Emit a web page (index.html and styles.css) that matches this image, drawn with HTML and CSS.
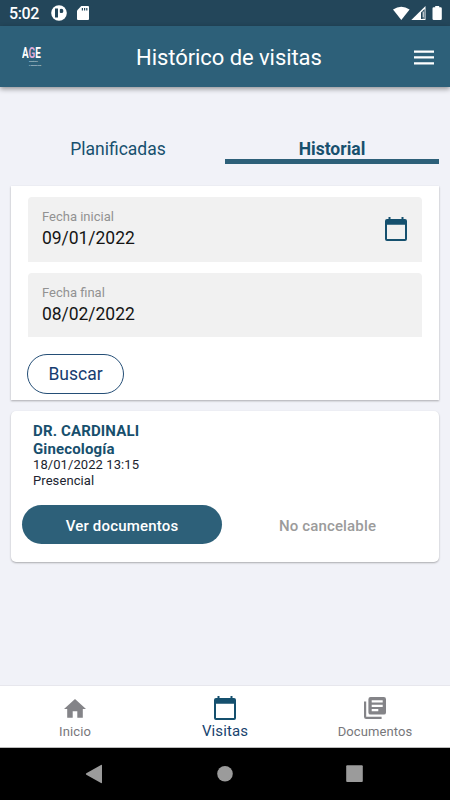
FILE: index.html
```html
<!DOCTYPE html>
<html lang="es">
<head>
<meta charset="utf-8">
<title>Histórico de visitas</title>
<link rel="stylesheet" href="styles.css">
</head>
<body>
<div class="status">
  <span class="clock">5:02</span>
  <svg class="app-dot" width="16" height="16" viewBox="0 0 16 16"><circle cx="8" cy="8" r="7.8" fill="#fff"/><path d="M4 3.500h3v9H4z" fill="#23465a"/><circle cx="10.200" cy="5.900" r="2.200" fill="#23465a"/><path d="M7.800 3.700h1v9h-1z" fill="#fff"/></svg>
  <svg class="sd" width="12" height="14" viewBox="0 0 12 14"><path d="M4.3 0H11a1 1 0 0 1 1 1v12a1 1 0 0 1-1 1H1a1 1 0 0 1-1-1V4.4z" fill="#fff"/><path d="M4.800 2h1.200v2.500H4.800zM7 2h1.200v2.500H7zM9.200 2h1.200v2.500H9.200z" fill="#23465a"/></svg>
  <svg class="signals" width="50" height="16" viewBox="0 0 50 16"><path d="M0 3.6Q8.300-2.200 16.600 3.600L8.300 14z" fill="#fff"/><path d="M18.300 14L32.500 0V14z" fill="#fff"/><path d="M28 6.600L31.600 3V13H28z" fill="#23465a"/><path d="M29.700 5.500h1v6h-1zM29.700 12.500h1v1.500h-1z" fill="#fff"/><path d="M39.500 2.500q0-1.200 1.200-1.200h1.500V0h4v1.300h1.400q1.200 0 1.200 1.200v10.300q0 1.200-1.200 1.200h-6.900q-1.200 0-1.200-1.200z" fill="#fff"/></svg>
</div>
<header class="appbar">
  <div class="logo"><b>A<i>G</i>E</b><small>Gestión</small><small>y Medicina</small></div>
  <h1>Histórico de visitas</h1>
  <svg class="menu" width="20" height="15" viewBox="0 0 20 15"><path d="M0 .4h20v2.300H0zM0 6.300h20v2.300H0zM0 12.200h20v2.300H0z" fill="#fff"/></svg>
</header>
<main>
  <nav class="tabs"><a class="tab"><span>Planificadas</span></a><a class="tab active"><span>Historial</span></a></nav>
  <section class="card filters">
    <div class="field">
      <div><label>Fecha inicial</label><p>09/01/2022</p></div>
      <svg class="cal" width="22" height="24" viewBox="0 0 22 24"><path fill="#15506e" fill-rule="evenodd" d="M3.500 0h2v2h11V0h2v2H20q2 0 2 2v18q0 2-2 2H2q-2 0-2-2V4q0-2 2-2h1.500zM2 7.800V22h18V7.800z"/></svg>
    </div>
    <div class="field"><div><label>Fecha final</label><p>08/02/2022</p></div></div>
    <button class="search">Buscar</button>
  </section>
  <section class="card visit">
    <div class="info"><h2>DR. CARDINALI</h2><h2>Ginecología</h2><p>18/01/2022 13:15</p><p>Presencial</p></div>
    <div class="actions"><button class="docs">Ver documentos</button><span class="nocancel">No cancelable</span></div>
  </section>
</main>
<nav class="bottom">
  <a class="item home"><svg width="22" height="19" viewBox="0 0 22 19"><path d="M11 0L0 10h3.200v8.700h5.500v-6.400h4.600v6.400h5.500V10H22z" fill="#848488"/></svg><span>Inicio</span></a>
  <a class="item current"><svg width="22" height="24" viewBox="0 0 22 24"><path fill="#15506e" fill-rule="evenodd" d="M3.500 0h2v2h11V0h2v2H20q2 0 2 2v18q0 2-2 2H2q-2 0-2-2V4q0-2 2-2h1.500zM2 7.800V22h18V7.800z"/></svg><span>Visitas</span></a>
  <a class="item"><svg width="22" height="22" viewBox="0 0 22 22"><path fill="#848488" fill-rule="evenodd" d="M0 4.400h2.200v15.400h15.400V22H2.200Q0 22 0 19.800zM6.600 0h13.200Q22 0 22 2.200v13.200q0 2.200-2.200 2.200H6.600q-2.200 0-2.200-2.200V2.200Q4.400 0 6.600 0zM7.700 3.300v2.200h11V3.300zM7.700 7.700v2.200h11V7.700zM7.700 12.100v2.200h6.600v-2.200z"/></svg><span>Documentos</span></a>
</nav>
<footer class="system">
  <svg width="450" height="52" viewBox="0 0 450 52"><g fill="#9b9b9b"><path d="M86.300 25.300L101 17q1-.5 1 .5v17q0 1-1 .5L86.300 26.700q-1-.7 0-1.400z"/><circle cx="225" cy="25.700" r="7.800"/><rect x="346.200" y="17.200" width="16.600" height="16.800" rx="1"/></g></svg>
</footer>
</body>
</html>
```
FILE: styles.css
```css
* { box-sizing: border-box; margin: 0; padding: 0; }
body { width: 450px; height: 800px; display: flex; flex-direction: column; background: #f1f2f8; font-family: Roboto, "Liberation Sans", sans-serif; color: #000; overflow: hidden; }
svg { display: block; flex: none; }
button { font-family: inherit; }
.status { height: 26px; background: #23465a; display: flex; align-items: center; padding: 0 7px 0 9px; flex: none; }
.clock { color: #fff; font-size: 16px; font-weight: 500; letter-spacing: -.4px; width: 42px; line-height: 26px; padding-top: 2px; }
.sd { margin-left: 10px; }
.signals { margin-left: auto; margin-top: 2px; }
.appbar { height: 61px; flex: none; background: #2d6079; display: flex; align-items: center; padding: 0 16px 0 22px; box-shadow: 0 2px 5px rgba(0,0,0,.4); }
.logo { width: 114px; color: #fff; }
.logo b { display: block; font-size: 15px; line-height: 14px; transform: scaleX(.66); transform-origin: left; }
.logo i { font-style: normal; color: #dcaad8; }
.logo small { display: block; font-size: 2.500px; line-height: 4px; height: 4px; padding-left: 7px; color: #e6edf2; }
.appbar h1 { font-size: 22px; font-weight: 400; line-height: 30px; padding-top: 2px; color: #fff; letter-spacing: -.06px; white-space: nowrap; }
.menu { margin-left: auto; margin-top: 1px; }
main { flex: 1; padding: 44px 11px 0; }
.tabs { display: flex; height: 33px; }
.tab { flex: 1; text-align: center; color: #17506e; font-size: 17.500px; line-height: 36px; }
.tab.active { font-weight: 700; border-bottom: 5px solid #2d6079; }
.card { background: #fff; box-shadow: 0 1px 2px rgba(0,0,0,.3); }
.filters { margin-top: 22px; height: 214px; padding: 11px 17px 0; }
.field { height: 64.500px; margin-bottom: 11px; background: #f1f1f1; border-radius: 4px 4px 0 0; display: flex; justify-content: space-between; padding: 11px 15px 0 14px; }
.field label { display: block; font-size: 13px; line-height: 17px; color: #929292; }
.field p { font-size: 17.500px; line-height: 26px; color: #151515; letter-spacing: -.04px; }
.cal { margin-top: 9px; }
.search { display: block; width: 97px; height: 40px; margin: 17px 0 0 -1px; border: 1px solid #244e76; border-radius: 20px; background: #fff; color: #163c70; font-size: 17.500px; }
.visit { margin-top: 11px; height: 151px; border-radius: 5px; padding: 11px; }
.info { padding-left: 11px; height: 83px; }
.info h2 { font-size: 15px; line-height: 18px; font-weight: 700; color: #174f6d; letter-spacing: .14px; }
.info p { font-size: 13px; line-height: 15.500px; color: #20242f; letter-spacing: .08px; position: relative; top: -.8px; }
.actions { display: flex; align-items: center; }
.docs { width: 200px; height: 39px; border: 0; border-radius: 20px; background: #2d6079; color: #fff; font-size: 15px; font-weight: 500; letter-spacing: .18px; padding-top: 2px; }
.nocancel { flex: 1; text-align: center; font-size: 15px; font-weight: 500; color: #9b9b9b; letter-spacing: .15px; padding: 2px 0 0 5px; }
.bottom { height: 63px; flex: none; background: #fff; border-top: 1px solid #e7e7ed; border-bottom: 1px solid #bbb; display: flex; }
.item { flex: 1; display: flex; flex-direction: column; align-items: center; justify-content: flex-end; padding-bottom: 7px; font-size: 13px; line-height: 17px; color: #77777b; letter-spacing: .1px; }
.item svg { margin-bottom: 4px; }
.item.home svg { margin-bottom: 5px; }
.item.current { color: #17436e; font-size: 15px; line-height: 18px; }
.item.current svg { margin-bottom: 2px; }
.system { height: 52px; flex: none; background: #000; }
```
